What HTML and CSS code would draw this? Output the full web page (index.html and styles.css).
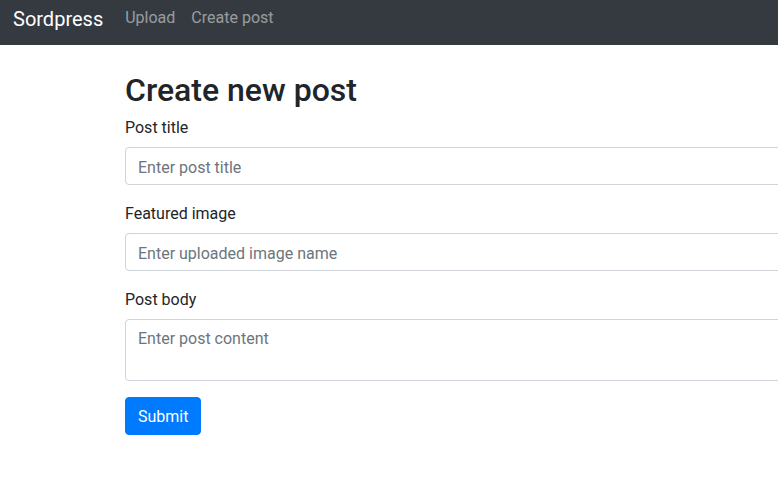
FILE: index.html
```html
<!DOCTYPE html>
<html lang="en">
<head>
<meta charset="utf-8">
<title>Sordpress - Create post</title>
<link rel="stylesheet" href="styles.css">
</head>
<body>
<nav class="navbar">
  <a class="brand" href="#">Sordpress</a>
  <ul class="nav">
    <li><a class="nav-link" href="#">Upload</a></li>
    <li><a class="nav-link" href="#">Create post</a></li>
  </ul>
</nav>
<main class="container">
  <h1 class="title">Create new post</h1>
  <form class="form">
    <div class="form-group">
      <label class="label" for="title">Post title</label>
      <input class="control" id="title" type="text" placeholder="Enter post title">
    </div>
    <div class="form-group">
      <label class="label" for="image">Featured image</label>
      <input class="control" id="image" type="text" placeholder="Enter uploaded image name">
    </div>
    <div class="form-group">
      <label class="label" for="body">Post body</label>
      <textarea class="control textarea" id="body" rows="2" placeholder="Enter post content"></textarea>
    </div>
    <button class="btn" type="submit">Submit</button>
  </form>
</main>
</body>
</html>
```
FILE: styles.css
```css
* { box-sizing: border-box; }
html, body { margin: 0; overflow: hidden; }
body {
  font-family: "Segoe UI", Roboto, "Helvetica Neue", Arial, sans-serif;
  font-size: 16px;
  line-height: 1.5;
  color: #212529;
  background: #fff;
  width: 778px;
}
.navbar {
  display: flex;
  align-items: flex-start;
  height: 45px;
  padding: 4px 13px 0;
  background: #343a40;
}
.brand {
  font-size: 20px;
  line-height: 30px;
  color: #fff;
  text-decoration: none;
  margin-right: 14px;
}
.nav {
  display: flex;
  list-style: none;
  margin: 0;
  padding: 2px 0 0;
}
.nav-link {
  display: block;
  padding: 0 8px;
  line-height: 24px;
  color: rgba(255,255,255,.5);
  text-decoration: none;
}
.container {
  width: 1110px;
  margin-left: 125px;
}
.title {
  font-size: 32px;
  font-weight: 500;
  line-height: 1.2;
  margin: 24px 0 6px;
  padding-top: 2px;
}
.form-group { margin-bottom: 16px; }
.label {
  display: inline-block;
  padding-top: 1px;
  margin-bottom: 7px;
}
.control {
  display: block;
  width: 100%;
  height: 38px;
  padding: 7px 12px 5px;
  font-family: inherit;
  font-size: 16px;
  line-height: 1.5;
  color: #495057;
  background: #fff;
  border: 1px solid #ced4da;
  border-radius: 4px;
  margin: 0;
}
.control::placeholder { color: #6c757d; opacity: 1; }
.textarea {
  height: 62px;
  resize: vertical;
  overflow: auto;
}
.btn {
  display: inline-block;
  font-family: inherit;
  font-size: 16px;
  line-height: 1.5;
  padding: 7px 12px 5px;
  color: #fff;
  background: #007bff;
  border: 1px solid #007bff;
  border-radius: 4px;
  margin: 0;
}
```
